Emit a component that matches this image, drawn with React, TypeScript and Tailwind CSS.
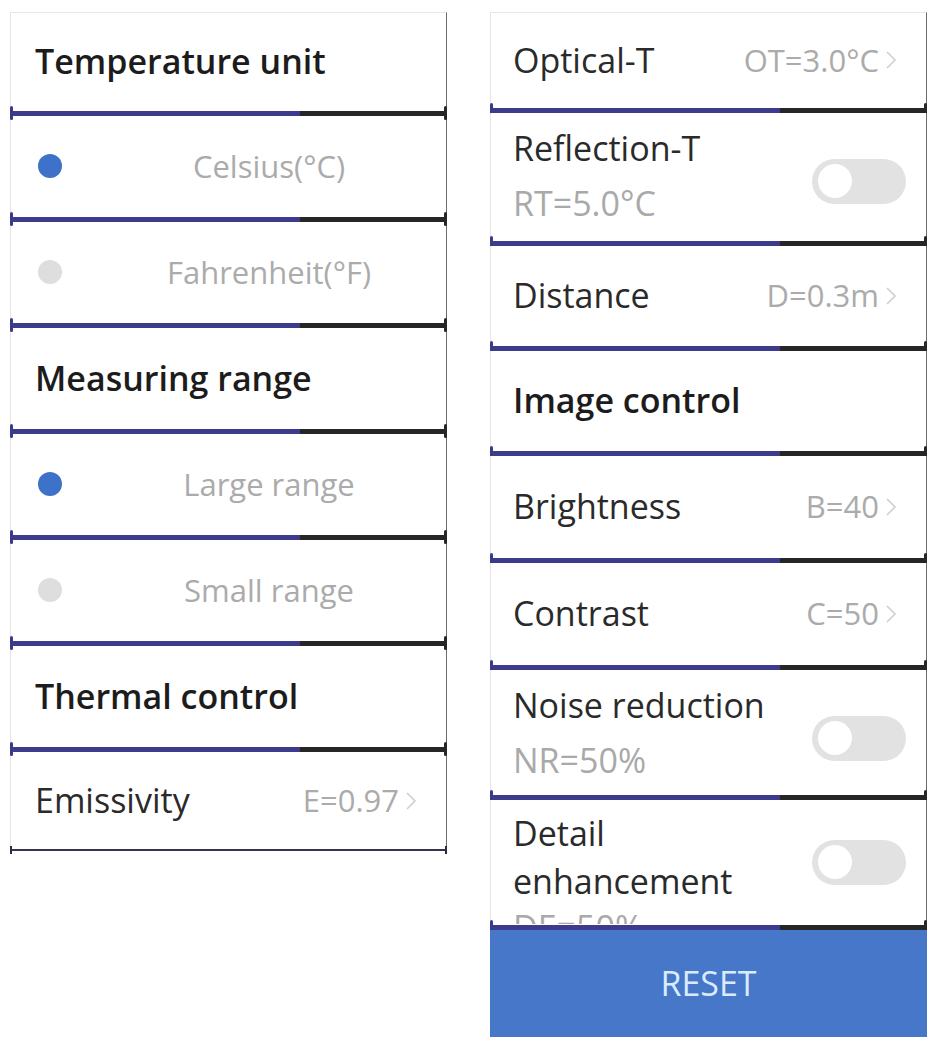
const font = { fontFamily: '"Open Sans", "Noto Sans", sans-serif' };

const Separator = () => (
  <div className="flex h-[6px] items-center">
    <div className="h-[14px] w-[3px] shrink-0 rounded-sm bg-[#3b3a8a]" />
    <div className="h-[5px] flex-[2] bg-[#3d3b8c]" />
    <div className="h-[5px] flex-1 bg-[#262626]" />
    <div className="h-[14px] w-[3px] shrink-0 rounded-sm bg-[#262626]" />
  </div>
);

const Chevron = () => (
  <svg width="12" height="20" viewBox="0 0 12 20" className="ml-[6px] shrink-0">
    <polyline points="2,2 10,10 2,18" fill="none" stroke="#cfcfcf" strokeWidth="1.6" />
  </svg>
);

const Toggle = () => (
  <div className="flex h-[45px] w-[94px] shrink-0 items-center rounded-full bg-[#e2e2e2] px-[6px]">
    <div className="h-[34px] w-[34px] rounded-full bg-white" />
  </div>
);

const Box = ({ h, children, top }: { h: string; children: React.ReactNode; top?: boolean }) => (
  <div className={`${h} overflow-hidden border-x border-l-[#e4e4e4] border-r-[#6b6b6b] bg-white ${top ? "border-t border-t-[#e8e8e8]" : ""}`}>
    {children}
  </div>
);

const Header = ({ text, pl = "pl-[24px]" }: { text: string; pl?: string }) => (
  <div className={`flex h-full items-center ${pl} text-[34px] font-semibold text-[#1c1c1c]`}>{text}</div>
);

const Radio = ({ text, on }: { text: string; on?: boolean }) => (
  <div className="flex h-full items-center pl-[27px]">
    <div className={`h-[24px] w-[24px] shrink-0 rounded-full ${on ? "bg-[#3d72c8]" : "bg-[#dedede]"}`} />
    <div className="ml-[30px] flex-1 text-center text-[31px] text-[#ababab]">{text}</div>
  </div>
);

const Value = ({ label, value, pl = "pl-[24px]" }: { label: string; value: string; pl?: string }) => (
  <div className={`flex h-full items-center justify-between ${pl} pr-[29px]`}>
    <span className="text-[34px] font-medium text-[#2a2a2a]">{label}</span>
    <span className="flex items-center text-[31px] text-[#ababab]">
      {value}
      <Chevron />
    </span>
  </div>
);

const Switch = ({ label, sub, wide }: { label: string; sub: string; wide?: boolean }) => (
  <div className={`flex h-full justify-between pl-[22px] pr-[20px] ${wide ? "pt-[9px]" : "pt-[13px]"}`}>
    <div className="w-[270px]">
      <div className={`text-[34px] font-medium text-[#2a2a2a] ${wide ? "leading-[48px]" : "leading-[44px]"}`}>{label}</div>
      <div className={`text-[34px] leading-[44px] text-[#a9a9a9] ${wide ? "" : "mt-[11px]"}`}>{sub}</div>
    </div>
    <div className={`flex items-center ${wide ? "h-[106px]" : "h-[110px]"}`}>
      <Toggle />
    </div>
  </div>
);

export default function App() {
  return (
    <div className="flex min-h-[1042px] gap-[43px] bg-white px-[10px] pt-[12px]" style={font}>
      {/* left column */}
      <div className="w-[437px]">
        <Box h="h-[98px]" top>
          <Header text="Temperature unit" />
        </Box>
        <Separator />
        <Box h="h-[100px]">
          <Radio text="Celsius(°C)" on />
        </Box>
        <Separator />
        <Box h="h-[100px]">
          <Radio text="Fahrenheit(°F)" />
        </Box>
        <Separator />
        <Box h="h-[100px]">
          <Header text="Measuring range" />
        </Box>
        <Separator />
        <Box h="h-[100px]">
          <Radio text="Large range" on />
        </Box>
        <Separator />
        <Box h="h-[100px]">
          <Radio text="Small range" />
        </Box>
        <Separator />
        <Box h="h-[100px]">
          <Header text="Thermal control" />
        </Box>
        <Separator />
        <Box h="h-[97px]">
          <Value label="Emissivity" value="E=0.97" />
        </Box>
        <div className="flex h-[2px] items-center">
          <div className="h-[8px] w-[2px] bg-[#2d2d4a]" />
          <div className="h-[2px] flex-1 bg-[#34344f]" />
          <div className="h-[8px] w-[2px] bg-[#2d2d2d]" />
        </div>
      </div>

      {/* right column */}
      <div className="flex w-[437px] flex-col">
        <Box h="h-[95px]" top>
          <Value label="Optical-T" value="OT=3.0°C" pl="pl-[22px]" />
        </Box>
        <Separator />
        <Box h="h-[127px]">
          <Switch label="Reflection-T" sub="RT=5.0°C" />
        </Box>
        <Separator />
        <Box h="h-[99px]">
          <Value label="Distance" value="D=0.3m" pl="pl-[22px]" />
        </Box>
        <Separator />
        <Box h="h-[99px]">
          <Header text="Image control" pl="pl-[22px]" />
        </Box>
        <Separator />
        <Box h="h-[101px]">
          <Value label="Brightness" value="B=40" pl="pl-[22px]" />
        </Box>
        <Separator />
        <Box h="h-[101px]">
          <Value label="Contrast" value="C=50" pl="pl-[22px]" />
        </Box>
        <Separator />
        <Box h="h-[124px]">
          <Switch label="Noise reduction" sub="NR=50%" />
        </Box>
        <Separator />
        <Box h="h-[124px]">
          <Switch label="Detail enhancement" sub="DE=50%" wide />
        </Box>
        <Separator />
        <button className="flex h-[107px] items-center justify-center bg-[#4677c8] text-[34px] font-medium text-[#d9ecff]">
          RESET
        </button>
      </div>
    </div>
  );
}
